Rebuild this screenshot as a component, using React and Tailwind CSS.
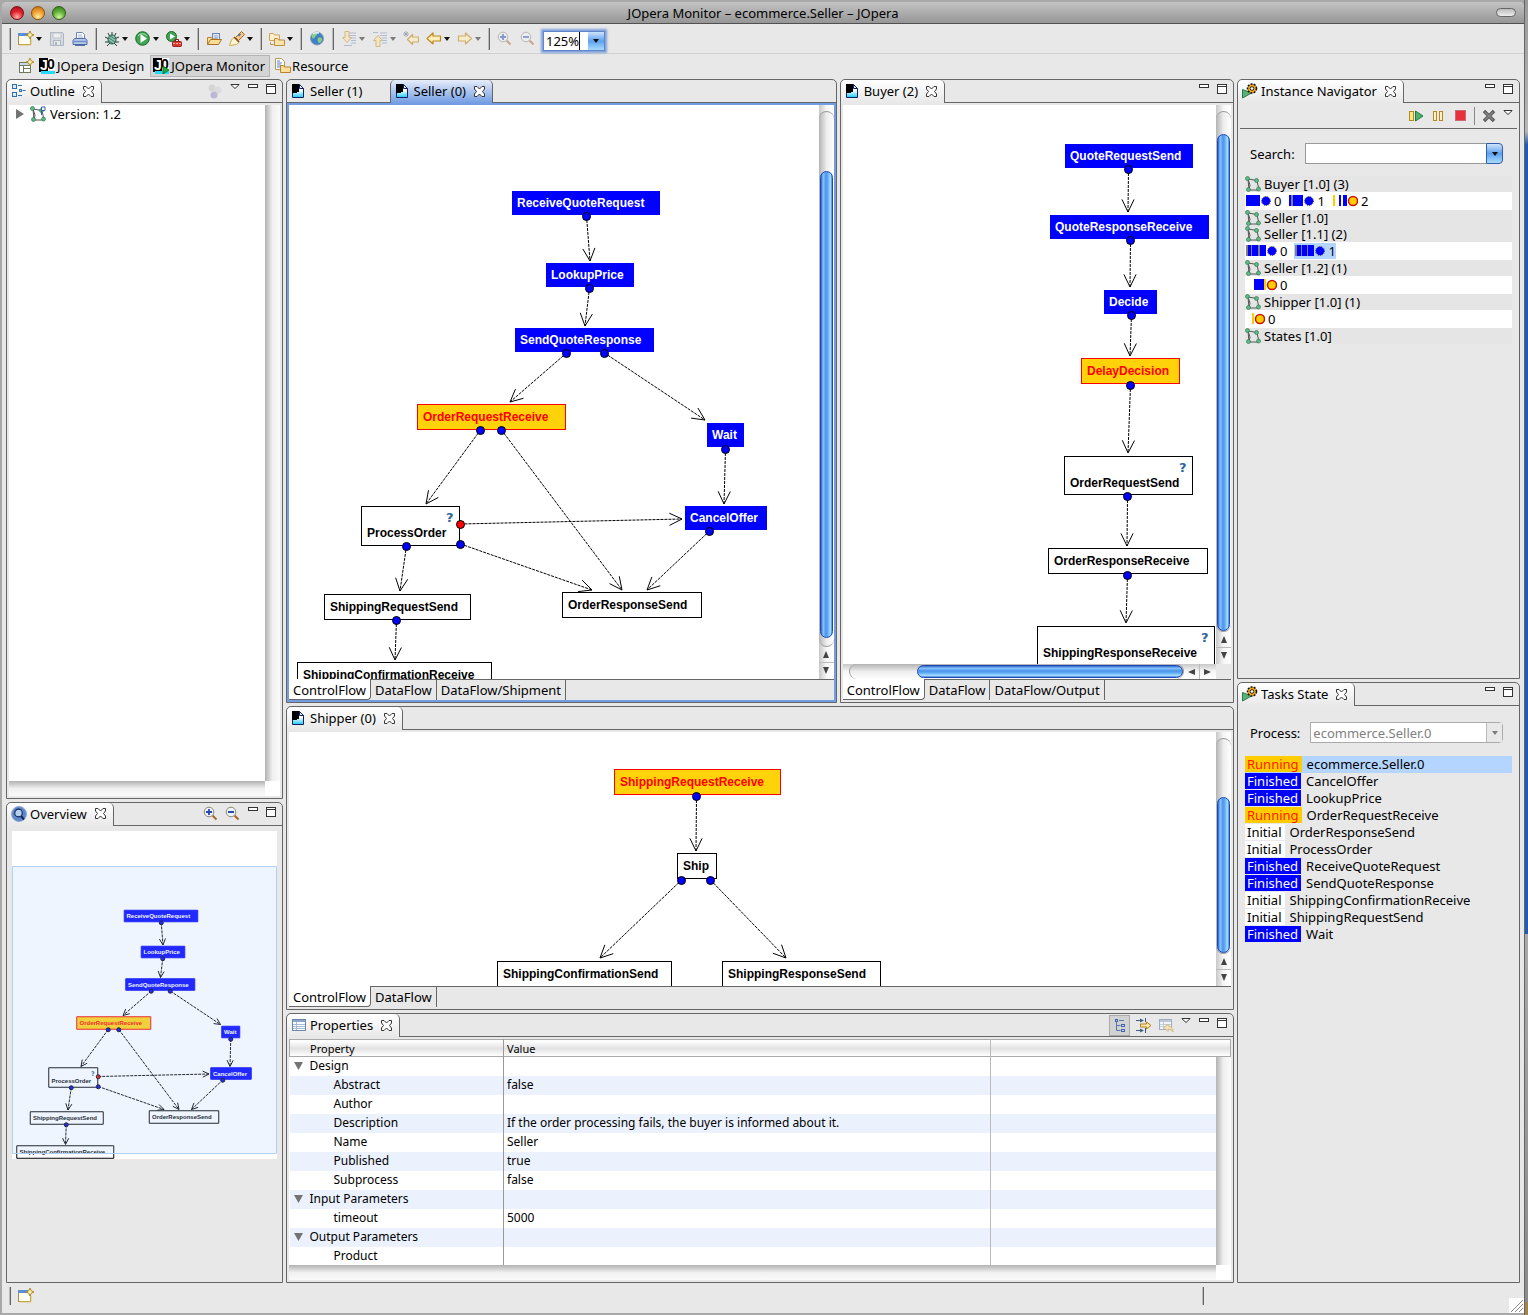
import { useState } from 'react';
import clsx from 'clsx';

/* ---------- data ---------- */

const sellerGraph = {
  nodes: [
    { x: 512, y: 191, w: 148, h: 24, label: 'ReceiveQuoteRequest', state: 'finished' },
    { x: 546, y: 263, w: 88, h: 24, label: 'LookupPrice', state: 'finished' },
    { x: 515, y: 328, w: 139, h: 24, label: 'SendQuoteResponse', state: 'finished' },
    { x: 417, y: 404, w: 149, h: 26, label: 'OrderRequestReceive', state: 'running' },
    { x: 707, y: 423, w: 37, h: 24, label: 'Wait', state: 'finished' },
    { x: 685, y: 506, w: 82, h: 24, label: 'CancelOffer', state: 'finished' },
    { x: 361, y: 506, w: 99, h: 40, label: 'ProcessOrder', state: 'initial', cond: true },
    { x: 324, y: 594, w: 147, h: 26, label: 'ShippingRequestSend', state: 'initial' },
    { x: 562, y: 592, w: 140, h: 26, label: 'OrderResponseSend', state: 'initial' },
    { x: 297, y: 662, w: 195, h: 26, label: 'ShippingConfirmationReceive', state: 'initial' },
  ],
  edges: [
    [586, 216, 590, 261],
    [589, 288, 585, 326],
    [566, 353, 510, 402],
    [604, 353, 705, 420],
    [480, 430, 426, 504],
    [501, 430, 622, 590],
    [460, 524, 682, 519, '#ff0000'],
    [460, 544, 592, 590],
    [406, 546, 400, 591],
    [725, 449, 724, 504],
    [709, 531, 647, 590],
    [396, 620, 395, 660],
  ],
};

const buyerGraph = {
  nodes: [
    { x: 1065, y: 144, w: 128, h: 24, label: 'QuoteRequestSend', state: 'finished' },
    { x: 1050, y: 215, w: 159, h: 24, label: 'QuoteResponseReceive', state: 'finished' },
    { x: 1104, y: 290, w: 53, h: 24, label: 'Decide', state: 'finished' },
    { x: 1081, y: 358, w: 99, h: 26, label: 'DelayDecision', state: 'running' },
    { x: 1064, y: 456, w: 129, h: 39, label: 'OrderRequestSend', state: 'initial', cond: true },
    { x: 1048, y: 548, w: 160, h: 26, label: 'OrderResponseReceive', state: 'initial' },
    { x: 1037, y: 626, w: 178, h: 40, label: 'ShippingResponseReceive', state: 'initial', cond: true },
  ],
  edges: [
    [1128, 169, 1128, 212],
    [1130, 240, 1130, 287],
    [1131, 315, 1130, 356],
    [1130, 385, 1128, 453],
    [1127, 496, 1127, 546],
    [1127, 575, 1126, 623],
  ],
};

const shipperGraph = {
  nodes: [
    { x: 614, y: 769, w: 167, h: 26, label: 'ShippingRequestReceive', state: 'running' },
    { x: 677, y: 853, w: 40, h: 26, label: 'Ship', state: 'initial' },
    { x: 497, y: 961, w: 175, h: 26, label: 'ShippingConfirmationSend', state: 'initial' },
    { x: 722, y: 961, w: 159, h: 26, label: 'ShippingResponseSend', state: 'initial' },
  ],
  edges: [
    [696, 796, 696, 851],
    [681, 880, 600, 958],
    [710, 880, 786, 958],
  ],
};

// bars: [x, width, color]; cx is the centre of the state dot
const B = '#0000ff';
const G = '#808080';
const Y = '#ffcc00';
const instances = [
  {
    name: 'Buyer [1.0] (3)',
    items: [
      { id: 0, bars: [[1, 14, B]], cx: 21 },
      { id: 1, bars: [[1, 2, B], [3, 2, G], [5, 10, B]], cx: 21 },
      { id: 2, bars: [[1, 2, Y], [7, 2, B], [11, 4, B]], cx: 21, running: true },
    ],
  },
  { name: 'Seller [1.0]' },
  {
    name: 'Seller [1.1] (2)',
    items: [
      { id: 0, bars: [[1, 2, G], [3, 3, B], [6, 1, G], [7, 6, B], [13, 2, G], [15, 6, B]], cx: 27 },
      { id: 1, bars: [[1, 2, G], [3, 4, B], [7, 1, G], [8, 5, B], [13, 1, G], [14, 6, B]], cx: 26, selected: true },
    ],
  },
  { name: 'Seller [1.2] (1)', items: [{ id: 0, bars: [[9, 10, B], [19, 2, Y]], cx: 27, running: true }] },
  { name: 'Shipper [1.0] (1)', items: [{ id: 0, bars: [[7, 2, Y]], cx: 15, running: true }] },
  { name: 'States [1.0]' },
];

const tasks = [
  ['Running', 'ecommerce.Seller.0'],
  ['Finished', 'CancelOffer'],
  ['Finished', 'LookupPrice'],
  ['Running', 'OrderRequestReceive'],
  ['Initial', 'OrderResponseSend'],
  ['Initial', 'ProcessOrder'],
  ['Finished', 'ReceiveQuoteRequest'],
  ['Finished', 'SendQuoteResponse'],
  ['Initial', 'ShippingConfirmationReceive'],
  ['Initial', 'ShippingRequestSend'],
  ['Finished', 'Wait'],
];

const properties = [
  { group: 'Design' },
  { name: 'Abstract', value: 'false' },
  { name: 'Author', value: '' },
  { name: 'Description', value: 'If the order processing fails, the buyer is informed about it.' },
  { name: 'Name', value: 'Seller' },
  { name: 'Published', value: 'true' },
  { name: 'Subprocess', value: 'false' },
  { group: 'Input Parameters' },
  { name: 'timeout', value: '5000' },
  { group: 'Output Parameters' },
  { name: 'Product', value: '' },
];

/* ---------- icons ---------- */

function Icon({ children, w = 16, h = 16, className }) {
  return (
    <svg width={w} height={h} viewBox={`0 0 ${w} ${h}`} className={clsx('shrink-0', className)} aria-hidden="true">
      {children}
    </svg>
  );
}

const Sparkle = ({ x = 12, y = 4 }) => (
  <path
    d={`M${x} ${y - 4}l1.2 2.8 2.8 1.2-2.8 1.2-1.2 2.8-1.2-2.8-2.8-1.2 2.8-1.2z`}
    fill="#fff3b0"
    stroke="#a5801a"
    strokeWidth="0.9"
  />
);

const NewIcon = () => (
  <Icon>
    <rect x="0.5" y="3.5" width="12" height="10" fill="#fdfdf4" stroke="#b08d3a" />
    <rect x="0" y="2" width="10" height="3" fill="#5c8fd6" />
    <path d="M13 8v6H2" fill="none" stroke="#e0c46c" />
    <Sparkle />
  </Icon>
);

const SaveIcon = () => (
  <Icon className="opacity-60">
    <path d="M1.5 1.5h12l1 1v12h-13z" fill="#c9d3e0" stroke="#8996a8" />
    <rect x="4" y="2" width="8" height="5" fill="#eef1f5" stroke="#9aa6b5" strokeWidth="0.8" />
    <rect x="4.5" y="9.5" width="7" height="5" fill="#e4e8ee" stroke="#8996a8" />
    <rect x="6" y="11" width="2" height="3" fill="#8996a8" />
  </Icon>
);

const PrintIcon = () => (
  <Icon>
    <path d="M4.5 1.5h6l2 2v5h-8z" fill="#fff" stroke="#6c86b8" />
    <path d="M6 4h4M6 6h5" stroke="#9fb2d6" />
    <path d="M2.5 7.500h11l1.500 2v4h-14v-4z" fill="#b9c9e8" stroke="#4f6da8" />
    <path d="M1 10.500h14" stroke="#6f8fd0" strokeWidth="1.500" />
    <path d="M3 14.500h10" stroke="#4f6da8" />
  </Icon>
);

const BugIcon = () => (
  <Icon>
    <path d="M1 6l4 2M1 11h4M3 15l3-3M8 1v4M12 2l-2 4M15 6l-4 1.500M15 11h-4M13 15l-3-3M4 2l2 4" stroke="#1f3a3a" fill="none" />
    <ellipse cx="8" cy="8.500" rx="4" ry="4.500" fill="#8cc6ac" stroke="#23564d" />
    <path d="M5 7l6 4M6 5l5 3M5 10l4 2.500" stroke="#23564d" strokeWidth="0.7" />
  </Icon>
);

const RunIcon = () => (
  <Icon>
    <circle cx="7.500" cy="7.500" r="6.800" fill="#3fa552" stroke="#1a6b2d" />
    <path d="M3 5a5.500 5.500 0 0 1 9 0" stroke="#a6e0ae" fill="none" />
    <path d="M5.500 3l6.500 4.500-6.500 4.500z" fill="#fff" />
  </Icon>
);

const ExternalRunIcon = () => (
  <Icon>
    <circle cx="5.500" cy="5.500" r="5" fill="#3fa552" stroke="#1a6b2d" />
    <path d="M4 2.500l5 3-5 3z" fill="#fff" />
    <path d="M9.500 10v-1.500h3v1.500" stroke="#8c1212" fill="none" />
    <rect x="6.500" y="10.500" width="9" height="5" rx="1" fill="#d83a34" stroke="#a02020" />
    <path d="M7 12.500h8" stroke="#f7b0a8" strokeDasharray="2 1" />
  </Icon>
);

const OpenFolderIcon = () => (
  <Icon>
    <rect x="6.500" y="2.500" width="7" height="8" fill="#dfe8f6" stroke="#6b86b5" />
    <path d="M8 5h4M8 7h4" stroke="#8fa7d0" />
    <path d="M1.500 13.500v-7h4l1 1.500h5v1" fill="#fbe3a0" stroke="#b5803a" />
    <path d="M1.500 13.500l3-5h11l-3 5z" fill="#fbdc92" stroke="#a8702a" />
  </Icon>
);

const TorchIcon = () => (
  <Icon>
    <path d="M.5 14.500l2-5.500 3-3 5 5-3 2.500z" fill="#fff6d0" stroke="#d0a850" />
    <path d="M6.500 6.500l6-6 3 3-6 6z" fill="#f6c88c" stroke="#a86c24" />
    <path d="M5 6l5 5" stroke="#8a4a24" strokeWidth="1.500" />
    <path d="M9.500 5l2-2" stroke="#3c64b0" strokeWidth="1.500" />
  </Icon>
);

const FoldersIcon = () => (
  <Icon>
    <path d="M.5 9.500v-7h4l1 1.500h5v5.500z" fill="#fdf0cf" stroke="#cfa35a" />
    <path d="M5.500 14.500v-7h3l1 1.500h6v5.500z" fill="#fbe3ac" stroke="#c08d3c" />
    <path d="M1.500 11.500v2h3" stroke="#c08d3c" fill="none" />
  </Icon>
);

const GlobeIcon = () => (
  <Icon>
    <circle cx="8" cy="7.500" r="6.500" fill="#3f80c8" stroke="#8d9cb4" />
    <path d="M3 4c2-2 4-2.500 5-2 1 1-1 3-2 4 0 1-2 2-3 1zM9 7c2-1 4 0 4 1s-1 4-3 4c-1-1-2-3-1-5z" fill="#8cd07a" />
    <path d="M4 3c2-1.500 4-1.500 6-1" stroke="#e4f2fc" fill="none" strokeWidth="1.500" />
  </Icon>
);

const StepDocIcon = ({ up }) => (
  <Icon className="opacity-60">
    <path d="M8 2h7M8 4.500h7M10 7h5M10 9.500h5M10 12h5" stroke="#8aa0c4" />
    <path
      d={up ? 'M6 4.500l4.500 5h-2.500v6h-4v-6h-2.500z' : 'M4 .5h4v6h2.500l-4.500 5-4.500-5h2.500z'}
      fill="#fbe6b4"
      stroke="#c79a3e"
    />
    <path d={up ? 'M1 1.500h5' : 'M3 14.500h8'} stroke="#8aa0c4" />
  </Icon>
);

const ArrowIcon = ({ flip, star, faded }) => (
  <Icon className={clsx(faded && 'opacity-60')}>
    <path
      d={
        flip
          ? 'M14.500 7.500l-6-5.500v3h-7v5h7v3z'
          : star
            ? 'M4.500 8.500l5-5v2.500h6v5h-6v2.500z'
            : 'M1 7.500l6-5.500v3h7.500v5h-7.500v3z'
      }
      fill="#fdeebb"
      stroke="#c0871a"
      strokeWidth="1.200"
      strokeLinejoin="round"
    />
    {star && <path d="M3 0v6M0 3h6M1 1l4 4M5 1l-4 4" stroke="#5c6f8c" strokeWidth="0.8" />}
  </Icon>
);

const ZoomIcon = ({ out, faded }) => (
  <Icon className={clsx(faded && 'opacity-50')}>
    <path d="M9.500 9.500l4 4" stroke="#a5672a" strokeWidth="2" />
    <circle cx="6" cy="6" r="4.800" fill="#eef3fc" stroke="#8a8a70" />
    <path d={out ? 'M3 6h6' : 'M3 6h6M6 3v6'} stroke="#2746b0" strokeWidth="1.800" />
  </Icon>
);

const PerspectiveIcon = () => (
  <Icon>
    <rect x="1.500" y="4.500" width="11" height="10" fill="#fff" stroke="#6f7b5a" />
    <rect x="2" y="5" width="10" height="2" fill="#c8d8ee" />
    <path d="M5.500 7v7M5.500 10.500h7M1.500 7.500h11" stroke="#6f7b5a" />
    <Sparkle />
  </Icon>
);

const JOperaIcon = ({ run }) => (
  <Icon>
    <rect x="9" y="0" width="7" height="12" fill="#fff" />
    <rect x="0" y="0" width="9" height="14" fill="#000" />
    <rect x="2" y="13" width="14" height="3" fill="#28d8f8" />
    <text x="1" y="12" fill="#fff" fontSize="14" fontWeight="700" fontFamily="Liberation Sans, sans-serif">J</text>
    <text x="8" y="11" fill="#000" fontSize="14" fontWeight="700" fontFamily="Liberation Sans, sans-serif">0</text>
    {run && <path d="M10 8l6 4-6 4z" fill="#1fae3c" stroke="#0c6a20" strokeWidth="0.8" />}
  </Icon>
);

const ResourceIcon = () => (
  <Icon>
    <path d="M.5 .5h6l3 3v8h-9z" fill="#fff" stroke="#b09a5a" />
    <path d="M2 3h3M2 5h5M2 7h4M2 9h3" stroke="#5d7fc0" />
    <path d="M5.500 14.500v-7h3l1 1.500h6v5.500z" fill="#fbdf9c" stroke="#b9822e" />
  </Icon>
);

const DocIcon = () => (
  <Icon>
    <defs>
      <linearGradient id="doc-fill" x1="0" y1="0" x2="0" y2="1">
        <stop offset="0.450" stopColor="#fff" />
        <stop offset="1" stopColor="#18c8f8" />
      </linearGradient>
    </defs>
    <path d="M1.500 1.500h7l4 4v9h-11z" fill="url(#doc-fill)" stroke="#10205c" />
    <path d="M1 1h7v8h-2v1h-5z" fill="#000" />
    <path d="M8.500 1.500v4h4z" fill="#dff4ff" stroke="#10205c" />
  </Icon>
);

const OutlineIcon = () => (
  <Icon>
    <g fill="#dcebfa" stroke="#2f6ea8">
      <rect x="1.500" y="1.500" width="4" height="4" />
      <rect x="1.500" y="9.500" width="4" height="4" />
      <rect x="8.500" y="6.500" width="2" height="2" />
    </g>
    <path d="M7 2.500h4M11.500 7.500h3M7 12.500h4" stroke="#2f6ea8" />
  </Icon>
);

const OverviewIcon = () => (
  <Icon>
    <circle cx="8" cy="8" r="7.500" fill="#5f88c8" stroke="#8fa8d4" />
    <circle cx="7.500" cy="7" r="3.800" fill="#b8d0ee" stroke="#13285c" strokeWidth="1.200" />
    <path d="M10 10l3 3.500" stroke="#13285c" strokeWidth="2" />
  </Icon>
);

const MonitorIcon = () => (
  <Icon>
    <path d="M.5 6.500l9 3.500-9 5z" fill="#5ab277" stroke="#2a7a48" />
    <circle cx="10" cy="5.500" r="4.500" fill="#f0a818" stroke="#111" strokeWidth="1.500" strokeDasharray="2 1.200" />
    <circle cx="10" cy="5.500" r="1.800" fill="#fff" stroke="#222" />
  </Icon>
);

const ProcessIcon = ({ flag }) => (
  <Icon>
    <path d="M3 3l9 1.500L14 14H4z" fill="none" stroke="#555" />
    <path d="M3 3l2 6-1 5" fill="none" stroke="#555" />
    <g fill="#5fb885" stroke="#2e7d52" strokeWidth="0.700">
      <circle cx="2.500" cy="2.500" r="2" />
      <circle cx="11.500" cy="4.500" r="2" />
      <circle cx="3.500" cy="13.500" r="2" />
      <circle cx="13.500" cy="13" r="2" />
    </g>
    {flag && <path d="M11.500 9v-8h3.500v3.500h-3.500" fill="#fff" stroke="#2f62a8" />}
  </Icon>
);

const TableIcon = () => (
  <Icon>
    <rect x="1.500" y="2.500" width="13" height="11" fill="#fff" stroke="#6c86a8" />
    <rect x="2" y="3" width="12" height="2" fill="#8ba6cc" />
    <path d="M2 7.500h12M2 9.500h12M2 11.500h12M5.500 5v8" stroke="#a9bcd4" />
  </Icon>
);

const CloseX = () => (
  <Icon w={11} h={11}>
    <path
      d="M.5 .5h2.500l2.500 2.500 2.500-2.500h2.500v2.500l-2 2.500 2 2.500v2.500h-2.500l-2.500-2.500-2.500 2.500h-2.500v-2.500l2-2.500-2-2.500z"
      fill="#fff"
      stroke="#333"
    />
  </Icon>
);

const MenuTri = () => (
  <Icon w={10} h={5}>
    <path d="M.8 .5h8.400l-4.200 4z" fill="#fff" stroke="#333" />
  </Icon>
);
const MinIcon = () => (
  <Icon w={10} h={4}>
    <rect x="0.500" y="0.500" width="9" height="3" fill="#fff" stroke="#333" />
  </Icon>
);
const MaxIcon = () => (
  <Icon w={10} h={10}>
    <rect x="0.500" y="0.500" width="9" height="9" fill="#fff" stroke="#333" />
    <path d="M0 2.500h10" stroke="#333" />
  </Icon>
);

const Caret = ({ faded }) => (
  <Icon w={6} h={4} className={clsx(faded && 'opacity-50')}>
    <path d="M0 0h6l-3 4z" fill="#111" />
  </Icon>
);

/* ---------- widgets ---------- */

function ToolButton({ label, caret, faded, children }) {
  return (
    <button aria-label={label} className="flex items-center gap-[2px]">
      {children}
      {caret && <Caret faded={faded} />}
    </button>
  );
}

const Sep = () => <div className="h-[22px] w-[2px] border-r border-l border-r-[#666] border-l-[#bbb]" />;

function Tab({ icon, title, closable = true, active, selected = true, onClick }) {
  return (
    <div
      className={clsx(
        '-mb-px flex h-[23px] items-center gap-2 border-r border-[#666] pr-[7px] pb-px pl-1',
        active && 'rounded-t-[5px] border-l bg-gradient-to-b from-[#e6edfa] to-[#739de3]',
        !active && selected && 'rounded-t-[5px] bg-gradient-to-b from-white to-[#e8e8e8]',
        !selected && 'border-r-0'
      )}
    >
      <button onClick={onClick} className="flex items-center gap-[3px] whitespace-nowrap">
        {icon}
        {title}
      </button>
      {closable ? (
        <button aria-label={`Close ${title}`}>
          <CloseX />
        </button>
      ) : (
        <span className="w-3" />
      )}
    </div>
  );
}

function WindowControls({ menu }) {
  return (
    <div className="ml-auto flex items-start gap-2 pt-1 pr-[6px]">
      {menu && (
        <button aria-label="View menu">
          <MenuTri />
        </button>
      )}
      <button aria-label="Minimize">
        <MinIcon />
      </button>
      <button aria-label="Maximize">
        <MaxIcon />
      </button>
    </div>
  );
}

function Panel({ tabs, tools, menu, controls = true, active, className, children }) {
  return (
    <section
      className={clsx('flex min-h-0 min-w-0 flex-col overflow-hidden rounded-t-[5px] border border-[#666] bg-[#e8e8e8]', className)}
    >
      <div className="flex h-[23px] shrink-0 border-b border-[#666]">
        {tabs}
        <div className="flex flex-1">
          {tools && <div className="ml-auto flex items-center gap-[6px] pr-[7px]">{tools}</div>}
          {controls && (
            <div className={clsx(!tools && 'ml-auto')}>
              <WindowControls menu={menu} />
            </div>
          )}
        </div>
      </div>
      <div className={clsx('flex min-h-0 flex-1 flex-col p-[2px]', active && 'bg-[#739de3]')}>{children}</div>
    </section>
  );
}

const ArrowGlyph = ({ d }) => (
  <Icon w={8} h={8}>
    <path d={d} fill="#444" />
  </Icon>
);

// offset and size are fractions of the groove
function ScrollV({ offset, size }) {
  return (
    <div className="flex w-[15px] shrink-0 flex-col bg-gradient-to-r from-[#c8c8c8] via-[#f6f6f6] to-white">
      <div className="flex min-h-0 flex-1 flex-col pt-[6px]">
        <div className="flex min-h-0 flex-1 flex-col rounded-full border-t border-b border-[#999] bg-gradient-to-r from-[#b4b4b4] via-[#ededed] to-white">
          <div style={{ height: `${offset * 100}%` }} />
          <div
            style={{ height: `${size * 100}%` }}
            className="mx-px rounded-full border border-[#1c47b5] bg-[linear-gradient(90deg,#2a62d0_0%,#8cc4fb_20%,#4a93ee_45%,#63b0f8_65%,#a9e0ff_85%,#4b83dc_100%)]"
          />
        </div>
      </div>
      <button aria-label="Scroll up" className="flex h-4 items-center justify-center border-b border-[#bbb]">
        <ArrowGlyph d="M4 0l3 7h-6z" />
      </button>
      <button aria-label="Scroll down" className="flex h-4 items-center justify-center">
        <ArrowGlyph d="M4 7l3-7h-6z" />
      </button>
    </div>
  );
}

function ScrollH({ offset, size }) {
  return (
    <div className="mr-[15px] flex h-[15px] shrink-0 bg-gradient-to-b from-[#c8c8c8] via-[#f6f6f6] to-white">
      <div className="flex min-w-0 flex-1 pl-[6px]">
        <div className="flex min-w-0 flex-1 rounded-full border-r border-l border-[#999] bg-gradient-to-b from-[#b4b4b4] via-[#ededed] to-white">
          <div style={{ width: `${offset * 100}%` }} />
          <div
            style={{ width: `${size * 100}%` }}
            className="my-px rounded-full border border-[#1c47b5] bg-[linear-gradient(180deg,#2a62d0_0%,#8cc4fb_20%,#4a93ee_45%,#63b0f8_65%,#a9e0ff_85%,#4b83dc_100%)]"
          />
        </div>
      </div>
      <button aria-label="Scroll left" className="flex w-4 items-center justify-center border-r border-[#bbb]">
        <ArrowGlyph d="M0 4l7-3v6z" />
      </button>
      <button aria-label="Scroll right" className="flex w-4 items-center justify-center">
        <ArrowGlyph d="M7 4l-7-3v6z" />
      </button>
    </div>
  );
}

const EmptyTrackV = () => <div className="w-[15px] shrink-0 bg-gradient-to-r from-[#b2b2b2] via-[#f0f0f0] to-[#fafafa]" />;
const EmptyTrackH = () => (
  <div className="flex h-[15px] shrink-0">
    <div className="flex-1 bg-gradient-to-b from-[#b2b2b2] via-[#f0f0f0] to-[#fafafa]" />
    <div className="w-[15px] bg-white" />
  </div>
);

function PageTabs({ pages }) {
  const [current, setCurrent] = useState(pages[0]);
  return (
    <div className="flex h-[21px] shrink-0 border-t border-[#666] bg-[#e8e8e8]">
      {pages.map((p) => (
        <button
          key={p}
          onClick={() => setCurrent(p)}
          className={clsx(
            'h-5 border-r border-[#666] px-1 leading-5 whitespace-nowrap',
            p === current && '-mt-px h-[21px] rounded-br-[4px] border-b bg-white pt-px'
          )}
        >
          {p}
        </button>
      ))}
    </div>
  );
}

/* ---------- graphs ---------- */

const nodeStyle = {
  finished: { fill: '#0000ff', stroke: '#0000ff', text: '#ffffff' },
  running: { fill: '#ffd20a', stroke: '#ff0000', text: '#ff0000' },
  initial: { fill: '#ffffff', stroke: '#000000', text: '#000000' },
};

function arrowHead(x1, y1, x2, y2) {
  const a = Math.atan2(y2 - y1, x2 - x1);
  const p = (d) => `${x2 - 14 * Math.cos(a + d)} ${y2 - 14 * Math.sin(a + d)}`;
  return `M${p(0.45)}L${x2} ${y2}L${p(-0.45)}`;
}

function Graph({ graph }) {
  return (
    <>
      {graph.edges.map(([x1, y1, x2, y2], i) => (
        <g key={i} stroke="#000" fill="none">
          <line x1={x1 + 0.5} y1={y1} x2={x2} y2={y2} strokeDasharray="3 1" />
          <path d={arrowHead(x1, y1, x2, y2)} />
        </g>
      ))}
      {graph.nodes.map((n) => {
        const s = nodeStyle[n.state];
        const pad = n.state === 'finished' ? 5 : 6;
        return (
          <g key={n.label}>
            <rect x={n.x + 0.5} y={n.y + 0.5} width={n.w - 1} height={n.h - 1} fill={s.fill} stroke={s.stroke} />
            <text
              x={n.x + pad}
              y={n.y + (n.cond ? 31 : n.state === 'finished' ? 16 : 17)}
              fill={s.text}
              fontSize="12"
              fontWeight="700"
              fontFamily="Liberation Sans, Arial, sans-serif"
            >
              {n.label}
            </text>
            {n.cond && (
              <text x={n.x + n.w - 14} y={n.y + 16} fill="#2f6499" fontSize="13" fontWeight="700" fontFamily="DejaVu Sans, sans-serif">
                ?
              </text>
            )}
          </g>
        );
      })}
      {graph.edges.map(([x, y, , , color], i) => (
        <circle key={i} cx={x + 0.5} cy={y + 0.5} r="4" fill={color || '#0000ff'} stroke="#000" />
      ))}
    </>
  );
}

function Canvas({ graph, x, y }) {
  return (
    <div className="min-h-0 min-w-0 flex-1 overflow-hidden bg-white">
      <svg className="block h-full w-full">
        <g transform={`translate(${-x} ${-y})`}>
          <Graph graph={graph} />
        </g>
      </svg>
    </div>
  );
}

/* ---------- views ---------- */

function TitleBar() {
  return (
    <header className="flex h-[22px] shrink-0 items-center border-b border-[#515151] bg-gradient-to-b from-[#c4c4c4] to-[#969696] px-2">
      <div className="flex flex-1 gap-[7px]">
        <button aria-label="Close" className="h-[14px] w-[14px] rounded-full border border-[#7c1414] bg-[radial-gradient(circle_at_50%_85%,#ffb0a8,#e0232e_50%,#a01018)]" />
        <button aria-label="Minimize" className="h-[14px] w-[14px] rounded-full border border-[#8c5210] bg-[radial-gradient(circle_at_50%_85%,#fff0a0,#f0a030_50%,#c06a10)]" />
        <button aria-label="Zoom" className="h-[14px] w-[14px] rounded-full border border-[#2c5c14] bg-[radial-gradient(circle_at_50%_85%,#d4f8a0,#62b03a_50%,#34781a)]" />
      </div>
      <h1>JOpera Monitor – ecommerce.Seller – JOpera</h1>
      <div className="flex flex-1 justify-end">
        <button aria-label="Toggle toolbar" className="h-[9px] w-5 rounded-full border border-[#666] bg-gradient-to-b from-[#bbb] to-[#eee]" />
      </div>
    </header>
  );
}

function Toolbar() {
  return (
    <div className="flex h-[30px] shrink-0 items-center gap-[7px] border-b border-[#d0d0d0] pl-[7px]">
      <Sep />
      <ToolButton label="New" caret><NewIcon /></ToolButton>
      <ToolButton label="Save"><SaveIcon /></ToolButton>
      <ToolButton label="Print"><PrintIcon /></ToolButton>
      <Sep />
      <ToolButton label="Debug" caret><BugIcon /></ToolButton>
      <ToolButton label="Run" caret><RunIcon /></ToolButton>
      <ToolButton label="External tools" caret><ExternalRunIcon /></ToolButton>
      <Sep />
      <ToolButton label="Open"><OpenFolderIcon /></ToolButton>
      <ToolButton label="Search" caret><TorchIcon /></ToolButton>
      <Sep />
      <ToolButton label="Working set" caret><FoldersIcon /></ToolButton>
      <Sep />
      <ToolButton label="Web browser"><GlobeIcon /></ToolButton>
      <Sep />
      <ToolButton label="Next annotation" caret faded><StepDocIcon /></ToolButton>
      <ToolButton label="Previous annotation" caret faded><StepDocIcon up /></ToolButton>
      <ToolButton label="Last edit location"><ArrowIcon star faded /></ToolButton>
      <ToolButton label="Back" caret><ArrowIcon /></ToolButton>
      <ToolButton label="Forward" caret faded><ArrowIcon flip faded /></ToolButton>
      <Sep />
      <ToolButton label="Zoom in"><ZoomIcon faded /></ToolButton>
      <ToolButton label="Zoom out"><ZoomIcon out faded /></ToolButton>
      <div className="mt-1 flex h-5 border border-[#5f86cc] bg-white shadow-[0_0_2px_2px_#7fa0dc]">
        <div className="w-[44px] pl-[2px]">
          <input aria-label="Zoom level" defaultValue="125%" className="block h-full w-[34px] border-r border-black outline-none" />
        </div>
        <button aria-label="Zoom levels" className="flex w-4 items-center justify-center bg-gradient-to-b from-[#cfe4fb] via-[#5ea0ee] to-[#a8dcff]">
          <Caret />
        </button>
      </div>
    </div>
  );
}

function PerspectiveBar() {
  return (
    <nav className="flex h-[25px] shrink-0 items-start pt-px pl-4">
      <button aria-label="Open perspective" className="flex h-[22px] items-center pr-[5px]">
        <PerspectiveIcon />
      </button>
      <button className="flex h-[22px] items-center gap-[2px]">
        <JOperaIcon />
        JOpera Design
      </button>
      <button className="ml-[6px] flex h-[22px] items-center gap-[2px] border border-[#b4b4b4] bg-[#d4d4d4] pr-1 pl-[2px]">
        <JOperaIcon run />
        JOpera Monitor
      </button>
      <button className="ml-[5px] flex h-[22px] items-center gap-px">
        <ResourceIcon />
        Resource
      </button>
    </nav>
  );
}

function OutlineView() {
  return (
    <Panel
      className="flex-[720]"
      tabs={<Tab icon={<OutlineIcon />} title="Outline" />}
      menu
      tools={
        <Icon className="opacity-40">
          <circle cx="5" cy="5" r="3.500" fill="#b9b9b9" />
          <circle cx="11" cy="7" r="3.500" fill="#c8c8c8" />
          <circle cx="7" cy="12" r="3.500" fill="#7a6fb8" />
        </Icon>
      }
    >
      <div className="flex min-h-0 flex-1">
        <div className="flex-1 bg-white">
          <div className="flex h-[17px] items-center gap-[6px] pl-[7px]">
            <Icon w={8} h={10}>
              <path d="M0 0v10l8-5z" fill="#737373" />
            </Icon>
            <div className="flex items-center gap-1">
              <ProcessIcon flag />
              <span>Version: 1.2</span>
            </div>
          </div>
        </div>
        <EmptyTrackV />
      </div>
      <EmptyTrackH />
    </Panel>
  );
}

function OverviewView() {
  return (
    <Panel
      className="flex-[481]"
      tabs={<Tab icon={<OverviewIcon />} title="Overview" />}
      tools={
        <>
          <button aria-label="Zoom in"><ZoomIcon /></button>
          <button aria-label="Zoom out"><ZoomIcon out /></button>
        </>
      }
    >
      <div className="px-[3px] pt-[3px]">
        <svg viewBox="288 33 530 656" className="block w-full bg-white [&_*]:[vector-effect:non-scaling-stroke]">
          <Graph graph={sellerGraph} />
          <rect x="289" y="104" width="528" height="574" fill="#aacdff" fillOpacity="0.200" stroke="#b0d0fa" />
        </svg>
      </div>
    </Panel>
  );
}

function InstanceItem({ item }) {
  return (
    <button className={clsx('flex h-4 items-center gap-[3px]', item.selected && 'bg-[#b4d5ff]')}>
      <Icon w={item.cx + 5} h={12}>
        {item.bars.map(([x, w, color]) => (
          <rect key={x} x={x} y="0" width={w} height="11" fill={color} />
        ))}
        {item.running ? (
          <circle cx={item.cx} cy="6" r="4.500" fill="#ffcc00" stroke="#cc1100" strokeWidth="1.500" />
        ) : (
          <>
            <circle cx={item.cx} cy="6" r="4.500" fill="#fff" stroke="#222" strokeDasharray="1 1" />
            <circle cx={item.cx} cy="6" r="4.200" fill="#0000ff" />
          </>
        )}
      </Icon>
      {item.id}
    </button>
  );
}

function InstanceNavigator() {
  return (
    <Panel className="flex-[600]" tabs={<Tab icon={<MonitorIcon />} title="Instance Navigator" />}>
      <div className="flex h-6 shrink-0 items-center justify-end gap-[6px] border-b border-[#666] pr-1 pb-px">
        <button aria-label="Resume">
          <Icon>
            <rect x="1.500" y="3.500" width="4" height="9" fill="#ffe680" stroke="#b08a20" />
            <path d="M7.500 3l7.500 5-7.500 5z" fill="#4fb06a" stroke="#207a3c" />
          </Icon>
        </button>
        <button aria-label="Suspend">
          <Icon>
            <rect x="3.500" y="3.500" width="3" height="9" fill="#fff2c0" stroke="#b08a20" />
            <rect x="9.500" y="3.500" width="3" height="9" fill="#fff2c0" stroke="#b08a20" />
          </Icon>
        </button>
        <button aria-label="Terminate">
          <Icon>
            <rect x="3.500" y="2.500" width="10" height="10" fill="#e8303c" stroke="#c86a70" />
          </Icon>
        </button>
        <div className="h-[18px] w-px bg-[#888]" />
        <button aria-label="Remove">
          <Icon>
            <path d="M3 3l10 10M13 3l-10 10" stroke="#5a5a5a" strokeWidth="3.500" />
            <path d="M4 4l8 8M12 4l-8 8" stroke="#858585" strokeWidth="1.500" />
          </Icon>
        </button>
        <button aria-label="View menu" className="mb-2">
          <MenuTri />
        </button>
      </div>
      <div className="flex flex-col px-[5px] pt-[14px]">
        <div className="flex items-center gap-[10px] pr-[9px] pl-[5px]">
          <label htmlFor="search">Search:</label>
          <div className="flex h-[21px] min-w-0 flex-1">
            <input id="search" className="w-0 min-w-0 flex-1 border border-r-0 border-[#999] bg-white px-1 outline-none" />
            <button aria-label="Search history" className="flex w-[17px] items-center justify-center rounded-r-[4px] border border-[#2f5fa8] bg-gradient-to-b from-[#cfe4fb] via-[#5ea0ee] to-[#a8dcff]">
              <Caret />
            </button>
          </div>
        </div>
        <ul className="mt-3 bg-[#e5e5e5]">
          {instances.map((p) => (
            <li key={p.name}>
              <div className="flex h-4 items-center gap-[3px]">
                <ProcessIcon />
                {p.name}
              </div>
              {p.items && (
                <div className="flex h-[18px] items-center gap-[7px] bg-white">
                  {p.items.map((item) => (
                    <InstanceItem key={item.id} item={item} />
                  ))}
                </div>
              )}
            </li>
          ))}
        </ul>
      </div>
    </Panel>
  );
}

function TasksState() {
  return (
    <Panel className="flex-[601]" tabs={<Tab icon={<MonitorIcon />} title="Tasks State" />}>
      <div className="flex flex-col px-[5px] pt-[14px]">
        <div className="flex items-center gap-[10px] pr-[9px] pl-[5px]">
          <label htmlFor="process">Process:</label>
          <div className="flex h-[21px] min-w-0 flex-1 rounded-r-[4px] border border-[#aaa] bg-white">
            <select id="process" disabled className="min-w-0 flex-1 appearance-none bg-white px-[2px] leading-5 text-[#808080] opacity-100">
              <option>ecommerce.Seller.0</option>
            </select>
            <span className="flex w-4 items-center justify-center border-l border-[#bbb] bg-[#e8e8e8]">
              <Caret faded />
            </span>
          </div>
        </div>
        <ul className="mt-[13px]">
          {tasks.map(([state, name], i) => (
            <li key={name} className={clsx('flex h-[17px] gap-[5px] leading-4', i === 0 && 'bg-[#b4d5ff]')}>
              <span
                className={clsx(
                  'h-4 pr-[3px] pl-[2px]',
                  state === 'Running' && 'bg-[#ffcc00] text-[#ff1a00]',
                  state === 'Finished' && 'bg-[#0000ff] text-white',
                  state === 'Initial' && 'bg-white'
                )}
              >
                {state}
              </span>
              {name}
            </li>
          ))}
        </ul>
      </div>
    </Panel>
  );
}

function PropertiesView() {
  return (
    <Panel
      className="flex-[268]"
      menu
      tabs={<Tab icon={<TableIcon />} title="Properties" />}
      tools={
        <>
          <button aria-label="Show categories" className="flex h-[21px] w-[21px] items-center justify-center border border-[#aaa] bg-[#d2d2d2]">
            <Icon>
              <path d="M4.500 4v9.500h4M4.500 8.500h4M7 3.500h5" stroke="#5578b0" fill="none" />
              <g fill="#c4d6f0" stroke="#3f65a8">
                <rect x="3.500" y="2.500" width="2" height="2" />
                <rect x="9.500" y="7.500" width="3" height="2" />
                <rect x="9.500" y="12.500" width="3" height="2" />
              </g>
            </Icon>
          </button>
          <button aria-label="Show advanced properties">
            <Icon>
              <path d="M0 3.500h5M0 13.500h5M9.500 1v4M9.500 11v5" stroke="#3f5f80" />
              <path d="M4 1.500l4 2-4 2zM4 11.500l4 2-4 2z" fill="#3f5f80" />
              <path d="M4.500 7h6v-2l4.500 3.500-4.500 3.500v-2h-6z" fill="#fde9a8" stroke="#b8801a" />
            </Icon>
          </button>
          <button aria-label="Restore default value" className="opacity-60">
            <Icon>
              <rect x="1.500" y="2.500" width="12" height="10" fill="#fff" stroke="#6c86a8" />
              <rect x="2" y="3" width="11" height="2" fill="#9fb4cc" />
              <path d="M2 7.500h11M2 9.500h11M5.500 5v7" stroke="#a9bcd4" />
              <path d="M6 10.500l4-3.500v2c3 0 5 2 5 6-1-2-3-3-5-2.500v2z" fill="#fde09a" stroke="#c79a3e" />
            </Icon>
          </button>
        </>
      }
    >
      <div className="flex min-h-0 flex-1 flex-col overflow-hidden">
        <div className="min-h-0 flex-1 overflow-hidden bg-white">
          <table className="w-full table-fixed border-collapse text-left text-xs">
            <colgroup>
              <col className="w-[214px]" />
              <col className="w-[487px]" />
              <col />
              <col className="w-[15px]" />
            </colgroup>
            <thead>
              <tr className="h-[17px] border border-[#aaa] bg-gradient-to-b from-white via-[#e2e2e2] to-white text-[11px] leading-[15px]">
                <th className="border-r border-[#999] py-0 pl-5 font-normal">Property</th>
                <th className="border-r border-[#bbb] py-0 pl-[3px] font-normal">Value</th>
                <th colSpan={2} />
              </tr>
            </thead>
            <tbody>
              {properties.map((p, i) => (
                <tr key={p.group || p.name} className={clsx('h-[19px] leading-[18px]', i % 2 === 1 && 'bg-[#ebf2fe]')}>
                  <td className={clsx('border-r border-[#999] py-0', p.group ? 'pl-1' : 'pl-11')}>
                    {p.group ? (
                      <span className="flex items-center gap-[7px]">
                        <Icon w={9} h={8}>
                          <path d="M0 0h9l-4.500 8z" fill="#737373" />
                        </Icon>
                        {p.group}
                      </span>
                    ) : (
                      p.name
                    )}
                  </td>
                  <td className="border-r border-[#bbb] py-0 pl-[3px]">{p.value}</td>
                  <td />
                  {i === 0 && (
                    <td rowSpan={properties.length} className="bg-gradient-to-r from-[#b2b2b2] via-[#f0f0f0] to-[#fafafa] p-0" />
                  )}
                </tr>
              ))}
            </tbody>
          </table>
        </div>
        <EmptyTrackH />
      </div>
    </Panel>
  );
}

function StatusBar() {
  return (
    <footer className="flex h-[30px] shrink-0 items-start pt-1 pl-[7px]">
      <div className="flex flex-1 items-center gap-[7px]">
        <div className="h-[18px] w-[2px] border-r border-l border-r-[#666] border-l-[#bbb]" />
        <button aria-label="Show view as a fast view"><NewIcon /></button>
      </div>
      <div className="flex w-[322px] justify-between">
        <div className="h-[18px] w-[2px] border-r border-l border-r-[#666] border-l-[#bbb]" />
        <Icon w={15} h={15} className="mt-[11px] bg-white">
          <path d="M2 14l12-12M6 14l8-8M10 14l4-4" stroke="#888" />
        </Icon>
      </div>
    </footer>
  );
}

export default function App() {
  return (
    <div className="h-screen min-h-[1000px] bg-[linear-gradient(180deg,#9a9a9a_0%,#b8b8b8_10%,#1f5cb4_11%,#1f5cb4_71%,#aaaaaa_71%,#8a8a8a_99%,#a5834a_99%)] pr-[3px] font-['Noto_Sans',sans-serif] text-[13px] leading-4 text-black">
      <div className="flex h-full flex-col border-r border-[#666] bg-[#a8a8a8] pt-[2px] pb-[2px] pl-[2px]">
        <div className="flex min-h-0 flex-1 flex-col overflow-hidden rounded-t-[5px] bg-[#e8e8e8]">
          <TitleBar />
          <Toolbar />
          <PerspectiveBar />
          <main className="flex min-h-0 flex-1 gap-[3px] px-1">
            <div className="flex w-[277px] shrink-0 flex-col gap-[3px]">
              <OutlineView />
              <OverviewView />
            </div>

            <div className="flex min-w-0 flex-1 flex-col gap-[3px]">
              <div className="flex min-h-0 flex-[624] gap-[3px]">
                <Panel
                  className="flex-[551]"
                  active
                  controls={false}
                  tabs={
                    <>
                      <Tab icon={<DocIcon />} title="Seller (1)" selected={false} closable={false} />
                      <Tab icon={<DocIcon />} title="Seller (0)" active />
                    </>
                  }
                >
                  <div className="flex min-h-0 flex-1">
                    <Canvas graph={sellerGraph} x={289} y={105} />
                    <ScrollV offset={0.11} size={0.875} />
                  </div>
                  <PageTabs pages={['ControlFlow', 'DataFlow', 'DataFlow/Shipment']} />
                </Panel>
                <Panel className="flex-[394]" tabs={<Tab icon={<DocIcon />} title="Buyer (2)" />}>
                  <div className="flex min-h-0 flex-1">
                    <Canvas graph={buyerGraph} x={843} y={105} />
                    <ScrollV offset={0.043} size={0.957} />
                  </div>
                  <ScrollH offset={0.203} size={0.797} />
                  <PageTabs pages={['ControlFlow', 'DataFlow', 'DataFlow/Output']} />
                </Panel>
              </div>
              <Panel className="flex-[302]" controls={false} tabs={<Tab icon={<DocIcon />} title="Shipper (0)" />}>
                <div className="flex min-h-0 flex-1">
                  <Canvas graph={shipperGraph} x={289} y={732} />
                  <ScrollV offset={0.27} size={0.73} />
                </div>
                <PageTabs pages={['ControlFlow', 'DataFlow']} />
              </Panel>
              <PropertiesView />
            </div>

            <div className="flex w-[283px] shrink-0 flex-col gap-[3px]">
              <InstanceNavigator />
              <TasksState />
            </div>
          </main>
          <StatusBar />
        </div>
      </div>
    </div>
  );
}
